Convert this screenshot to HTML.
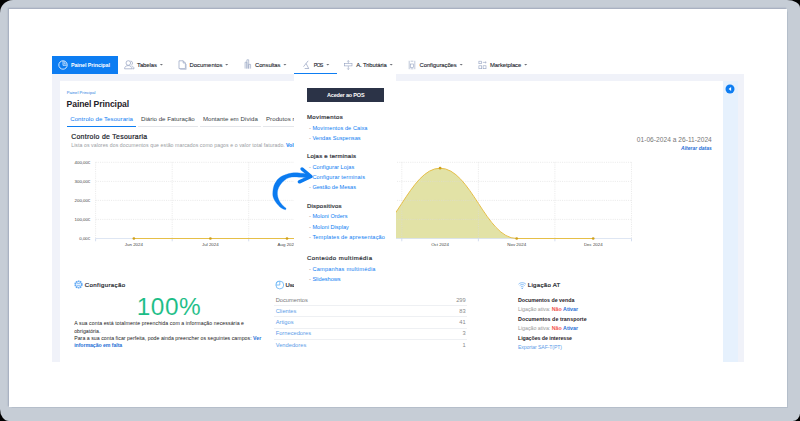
<!DOCTYPE html>
<html>
<head>
<meta charset="utf-8">
<style>
*{box-sizing:border-box;margin:0;padding:0}
html,body{width:800px;height:421px;overflow:hidden;background:#000;font-family:"Liberation Sans",sans-serif}
#frame{position:absolute;left:0;top:0;width:800px;height:421px;background:#c6cdd6;border-radius:13px 13px 7.5px 9px/13px 8px 7.5px 12px}
#card{position:absolute;left:9px;top:8.8px;width:777.8px;height:398.3px;background:#fff;box-shadow:-1px -1px 1px 0.2px rgba(110,125,155,.36),0.6px 0.6px 1px rgba(110,125,155,.18)}
.abs{position:absolute}
.t{position:absolute;white-space:nowrap;line-height:1;transform:translateY(-50%)}
</style>
</head>
<body>
<div id="frame"></div>
<div id="card"></div>

<!-- light band background of app -->
<div class="abs" style="left:52.3px;top:74.2px;width:691.3px;height:287.6px;background:#f0f2f9"></div>
<!-- white content panel -->
<div class="abs" style="left:59.6px;top:81.3px;width:663px;height:280.5px;background:#fff"></div>
<!-- light blue side bar -->
<div class="abs" style="left:722.6px;top:81.3px;width:15.2px;height:280.5px;background:#e6f1fd"></div>
<!-- collapse circle -->
<svg class="abs" style="left:725.2px;top:83.9px" width="10" height="10" viewBox="0 0 10 10"><circle cx="5" cy="5" r="4.5" fill="#0d7df2"/><path d="M6.1 3.1 L3.6 5 L6.1 6.9 Z" fill="#fff"/></svg>

<!-- NAV -->
<div class="abs" style="left:52.3px;top:56.2px;width:65.6px;height:18px;background:#0d7df2"></div>
<svg class="abs" style="left:58.3px;top:59.8px" width="10" height="10" viewBox="0 0 10 10" fill="none" stroke="#fff" stroke-width="0.8"><circle cx="5" cy="5" r="4.2"/><path d="M5 1.2 V5.3 H8.6" stroke-width="0.7"/><path d="M6.3 1.4 V3.9 H8.6" stroke-width="0.6"/></svg>


<svg class="abs" style="left:0;top:0" width="800" height="100" viewBox="0 0 800 100"><path d="M159.85 64.0 H162.95 L161.40 65.6 ZM225.15 64.0 H228.25 L226.70 65.6 ZM283.35 64.0 H286.45 L284.90 65.6 ZM326.25 64.0 H329.35 L327.80 65.6 ZM389.65 64.0 H392.75 L391.20 65.6 ZM459.65 64.0 H462.75 L461.20 65.6 ZM524.15 64.0 H527.25 L525.70 65.6 Z" fill="#6e7178"/></svg>
<!-- nav icons -->
<svg class="abs" style="left:124px;top:59.8px" width="11" height="10" viewBox="0 0 11 10" fill="none" stroke="#93a1c0" stroke-width="0.7"><circle cx="4.3" cy="3" r="2.3"/><path d="M0.6 8.8 C0.6 6.6 2.2 5.6 4.3 5.6 C6.4 5.6 8 6.6 8 8.8 Z"/><path d="M6.6 1 A2.2 2.2 0 0 1 7.2 5.2 M8.3 6.2 C9.4 6.6 10 7.4 10 8.8 H8.4"/></svg>
<svg class="abs" style="left:177.6px;top:59.6px" width="9" height="10" viewBox="0 0 9 10" fill="none" stroke="#93a1c0" stroke-width="0.7"><path d="M1 0.8 H5.2 L7.4 3 V8.6 H1 Z"/><path d="M5.2 0.8 V3 H7.4"/><path d="M2.2 9.4 H8.2 V4" stroke-width="0.5"/></svg>
<svg class="abs" style="left:243.6px;top:59.4px" width="8" height="10.4" viewBox="0 0 8 10.4" fill="none" stroke="#93a1c0" stroke-width="0.65"><path d="M1.1 9.6 V3.2 H2.9 V9.6 M2.9 9.6 V0.8 H4.7 V9.6 M4.7 9.6 V5.4 H6.6 V9.6"/></svg>
<svg class="abs" style="left:301.5px;top:59.6px" width="9" height="10" viewBox="0 0 9 10" fill="none" stroke="#93a1c0" stroke-width="0.7"><path d="M6.2 0.8 L1.5 6.7 M4.1 3.5 L6.6 8.3 M2.7 8.5 H7"/></svg>
<svg class="abs" style="left:344.4px;top:59.6px" width="9" height="10" viewBox="0 0 9 10" fill="none" stroke="#93a1c0" stroke-width="0.6"><path d="M4.3 0.6 V3.4 M4.3 6 V9.5 M3.3 1.6 L4.3 0.6 L5.3 1.6 M3.3 8.5 L4.3 9.5 L5.3 8.5"/><rect x="0.6" y="3.5" width="7.4" height="2.4"/></svg>
<svg class="abs" style="left:408px;top:59.6px" width="8" height="10" viewBox="0 0 8 10" fill="none" stroke="#93a1c0" stroke-width="0.6"><path d="M1.2 0.8 V9.2 M6.8 0.8 V9.2"/><path d="M2.6 1.2 H5.4 M2.6 8.8 H5.4"/><rect x="2.6" y="4" width="2.8" height="3.4"/></svg>
<svg class="abs" style="left:477.8px;top:59.8px" width="9" height="10" viewBox="0 0 9 10" fill="none" stroke="#93a1c0" stroke-width="0.6"><rect x="0.9" y="1.2" width="2.7" height="2.5"/><rect x="0.9" y="5.8" width="2.8" height="2.9"/><rect x="5.1" y="5.8" width="2.9" height="2.9"/><path d="M4.8 2.4 H8.2 M7.2 1.6 L8.2 2.4 L7.2 3.2"/></svg>

<!-- PANEL HEADER -->

<!-- tabs -->
<div class="abs" style="left:66.8px;top:125.9px;width:69.4px;height:1px;background:#0d7df2"></div>
<div class="abs" style="left:137.5px;top:126px;width:60px;height:0.7px;background:#e4e6ea"></div>
<div class="abs" style="left:199.8px;top:126px;width:61px;height:0.7px;background:#e4e6ea"></div>
<div class="abs" style="left:262.5px;top:126px;width:40px;height:0.7px;background:#e4e6ea"></div>



<!-- CHART -->
<svg class="abs" style="left:0;top:0" width="800" height="421" viewBox="0 0 800 421">
<path d="M133.9 238.5 H363.5 C394.2 238.5 409.5 168.2 440.1 168.2 C470.7 168.2 486.0 238.5 516.7 238.5 H593.2 Z" fill="#e2e2a6"/>
<g stroke="#dadada" stroke-width="0.55" stroke-dasharray="1.1 1.1" fill="none">
<path d="M95.6 162.3H631.5M95.6 181.4H631.5M95.6 200.4H631.5M95.6 219.4H631.5"/>
<path d="M95.6 162.3V238.5M172.2 162.3V238.5M248.7 162.3V238.5M325.3 162.3V238.5M401.8 162.3V238.5M478.4 162.3V238.5M554.9 162.3V238.5M631.5 162.3V238.5"/>
</g>
<path d="M95.6 238.5H631.5" stroke="#d5dff0" stroke-width="0.8"/>
<path d="M95.6 238.5V241.3M172.2 238.5V241.3M248.7 238.5V241.3M325.3 238.5V241.3M401.8 238.5V241.3M478.4 238.5V241.3M554.9 238.5V241.3M631.5 238.5V241.3" stroke="#c3d0ea" stroke-width="0.7"/>
<path d="M133.9 238.5 H363.5 C394.2 238.5 409.5 168.2 440.1 168.2 C470.7 168.2 486.0 238.5 516.7 238.5 H593.2" fill="none" stroke="#e6bf48" stroke-width="1"/>
<g fill="#cfa01c"><circle cx="133.9" cy="238.5" r="1.35"/><circle cx="210.4" cy="238.5" r="1.35"/><circle cx="287.0" cy="238.5" r="1.35"/><circle cx="363.5" cy="238.5" r="1.35"/><circle cx="440.1" cy="168.2" r="1.35"/><circle cx="516.7" cy="238.5" r="1.35"/><circle cx="593.2" cy="238.5" r="1.35"/></g>
</svg>

<!-- CONFIGURAÇÃO -->
<svg class="abs" style="left:73.8px;top:280px" width="9" height="9" viewBox="0 0 10 10" fill="none" stroke="#5aa5f3" stroke-width="0.8"><circle cx="5" cy="5" r="3.8" stroke-dasharray="1.7 0.7" stroke-width="1.5"/><circle cx="5" cy="5" r="3.1"/><path d="M3.4 4 H6.6 M3.4 6 H6.6"/></svg>

<!-- USO -->
<svg class="abs" style="left:275.3px;top:279.6px" width="10" height="10" viewBox="0 0 10 10" fill="none" stroke="#5aaef6" stroke-width="0.75"><circle cx="4.8" cy="5" r="3.9"/><path d="M4.8 5 V1.1 M4.8 5 H0.9"/><path d="M0.9 3.4 A4.6 4.6 0 0 1 3.4 0.9" stroke-width="0.6"/></svg>

<div class="abs" style="left:274px;top:305.2px;width:193px;height:0.7px;background:#eef0f3"></div>
<div class="abs" style="left:274px;top:316.3px;width:193px;height:0.7px;background:#eef0f3"></div>
<div class="abs" style="left:274px;top:327.5px;width:193px;height:0.7px;background:#eef0f3"></div>
<div class="abs" style="left:274px;top:338.6px;width:193px;height:0.7px;background:#eef0f3"></div>
<!-- LIGAÇÃO AT -->
<svg class="abs" style="left:518px;top:281.6px" width="8.4" height="7.6" viewBox="0 0 10 9" fill="none" stroke="#5aa5f3" stroke-width="0.8"><path d="M0.6 2.6 C3 0.2 7 0.2 9.4 2.6 M2 4.2 C3.8 2.6 6.2 2.6 8 4.2 M3.4 5.8 C4.4 5 5.6 5 6.6 5.8"/><path d="M4.2 7 L5 8.2 L5.8 7 Z" fill="#5aa5f3" stroke-width="0.4"/></svg>

<div class="t" style="left:70.9px;top:66.05px;font-size:5.4px;letter-spacing:-0.070px;color:#fff;font-weight:bold">Painel Principal</div>
<div class="t" style="left:137px;top:65.71px;font-size:5.9px;letter-spacing:-0.052px;color:#23262e;-webkit-text-stroke:0.1px #23262e;">Tabelas</div>
<div class="t" style="left:189.5px;top:65.71px;font-size:5.9px;letter-spacing:-0.009px;color:#23262e;-webkit-text-stroke:0.1px #23262e;">Documentos</div>
<div class="t" style="left:255px;top:65.71px;font-size:5.9px;letter-spacing:-0.088px;color:#23262e;-webkit-text-stroke:0.1px #23262e;">Consultas</div>
<div class="t" style="left:356.2px;top:65.71px;font-size:5.9px;letter-spacing:-0.101px;color:#23262e;-webkit-text-stroke:0.1px #23262e;">A. Tributária</div>
<div class="t" style="left:419.5px;top:65.71px;font-size:5.9px;letter-spacing:-0.061px;color:#23262e;-webkit-text-stroke:0.1px #23262e;">Configurações</div>
<div class="t" style="left:490px;top:65.71px;font-size:5.9px;letter-spacing:-0.084px;color:#23262e;-webkit-text-stroke:0.1px #23262e;">Marketplace</div>
<div class="t" style="left:66.8px;top:92.77px;font-size:4.1px;letter-spacing:0.032px;color:#2a7de0">Painel Principal</div>
<div class="t" style="left:66.6px;top:104.08px;font-size:8.6px;letter-spacing:-0.100px;font-weight:bold;color:#1f2229">Painel Principal</div>
<div class="t" style="left:70.2px;top:118.89px;font-size:6.1px;letter-spacing:0.060px;color:#0d7df2">Controlo de Tesouraria</div>
<div class="t" style="left:141px;top:118.89px;font-size:6.1px;letter-spacing:0.009px;color:#3b3f48">Diário de Faturação</div>
<div class="t" style="left:202.9px;top:118.89px;font-size:6.1px;letter-spacing:0.021px;color:#3b3f48">Montante em Dívida</div>
<div class="t" style="left:266px;top:118.89px;font-size:6.1px;letter-spacing:0.050px;color:#3b3f48">Produtos mais vendidos</div>
<div class="t" style="left:71.2px;top:136.90px;font-size:6.9px;letter-spacing:0.305px;color:#23262d;-webkit-text-stroke:0.22px #23262d">Controlo de Tesouraria</div>
<div class="t" style="left:71.2px;top:146.23px;font-size:5.2px;letter-spacing:0.063px;color:#9a9da3">Lista os valores dos documentos que estão marcados como pagos e o valor total faturado.</div>
<div class="t" style="left:286px;top:146.23px;font-size:5.2px;color:#0d7df2"><b>Voltar</b></div>
<div class="t" style="left:636.8px;top:139.50px;font-size:6.6px;letter-spacing:0.031px;color:#777">01-06-2024 a 26-11-2024</div>
<div class="t" style="left:681px;top:148.00px;font-size:5px;letter-spacing:0.018px;color:#1f6fd6;font-weight:bold;font-style:italic">Alterar datas</div>
<div class="t" style="left:74.6px;top:163.07px;font-size:4.4px;letter-spacing:-0.029px;color:#444;">400,00€</div>
<div class="t" style="left:74.6px;top:181.50px;font-size:4.4px;letter-spacing:-0.029px;color:#444;">300,00€</div>
<div class="t" style="left:74.6px;top:201.09px;font-size:4.4px;letter-spacing:-0.029px;color:#444;">200,00€</div>
<div class="t" style="left:74.6px;top:220.08px;font-size:4.4px;letter-spacing:-0.029px;color:#444;">100,00€</div>
<div class="t" style="left:79.2px;top:238.70px;font-size:4.4px;letter-spacing:0.025px;color:#444;">0,00€</div>
<div class="t" style="left:133.9px;top:244.60px;font-size:4.4px;color:#444;transform:translate(-50%,-50%)">Jun 2024</div>
<div class="t" style="left:210.4px;top:244.60px;font-size:4.4px;color:#444;transform:translate(-50%,-50%)">Jul 2024</div>
<div class="t" style="left:287px;top:244.60px;font-size:4.4px;color:#444;transform:translate(-50%,-50%)">Aug 2024</div>
<div class="t" style="left:363.6px;top:244.60px;font-size:4.4px;color:#444;transform:translate(-50%,-50%)">Sep 2024</div>
<div class="t" style="left:440.1px;top:244.60px;font-size:4.4px;color:#444;transform:translate(-50%,-50%)">Oct 2024</div>
<div class="t" style="left:516.7px;top:244.60px;font-size:4.4px;color:#444;transform:translate(-50%,-50%)">Nov 2024</div>
<div class="t" style="left:593.3px;top:244.60px;font-size:4.4px;color:#444;transform:translate(-50%,-50%)">Dec 2024</div>
<div class="t" style="left:84.75px;top:284.63px;font-size:6.1px;letter-spacing:0.382px;color:#23262d;-webkit-text-stroke:0.2px #23262d">Configuração</div>
<div class="t" style="left:136.70000000000002px;top:307.15px;font-size:24.4px;letter-spacing:0.570px;color:#1bbd86;-webkit-text-stroke:0.08px #fff">100%</div>
<div class="t" style="left:74.2px;top:323.90px;font-size:5.2px;letter-spacing:0.077px;color:#222">A sua conta está totalmente preenchida com a informação necessária e</div>
<div class="t" style="left:74.2px;top:331.91px;font-size:5.2px;letter-spacing:0.022px;color:#222">obrigatória.</div>
<div class="t" style="left:74.2px;top:339.06px;font-size:5.2px;letter-spacing:0.044px;color:#222">Para a sua conta ficar perfeita, pode ainda preencher os seguintes campos: <b style="color:#1f6fd6">Ver</b></div>
<div class="t" style="left:74.2px;top:346.30px;font-size:5.2px;letter-spacing:-0.056px;color:#1f6fd6"><b>informação em falta</b></div>
<div class="t" style="left:285.5px;top:285.75px;font-size:5.9px;letter-spacing:-0.100px;color:#23262d;-webkit-text-stroke:0.2px #23262d">Uso</div>
<div class="t" style="left:527.8px;top:285.05px;font-size:6.1px;letter-spacing:0.273px;color:#23262d;-webkit-text-stroke:0.2px #23262d">Ligação AT</div>
<div class="t" style="left:518px;top:301.10px;font-size:5.3px;letter-spacing:-0.006px;font-weight:bold;color:#1f2229">Documentos de venda</div>
<div class="t" style="left:518px;top:309.91px;font-size:5.3px;letter-spacing:-0.029px;color:#999">Ligação ativa: <b style="color:#f2554f">Não</b> <b style="color:#1f6fd6">Ativar</b></div>
<div class="t" style="left:518px;top:320.08px;font-size:5.3px;letter-spacing:0.052px;font-weight:bold;color:#1f2229">Documentos de transporte</div>
<div class="t" style="left:518px;top:328.50px;font-size:5.3px;letter-spacing:-0.029px;color:#999">Ligação ativa: <b style="color:#f2554f">Não</b> <b style="color:#1f6fd6">Ativar</b></div>
<div class="t" style="left:518px;top:338.80px;font-size:5.3px;letter-spacing:-0.068px;font-weight:bold;color:#1f2229">Ligações de interesse</div>
<div class="t" style="left:518px;top:347.50px;font-size:5.1px;letter-spacing:-0.076px;color:#5a9be8">Exportar SAF-T(PT)</div>
<div class="t" style="left:275.7px;top:300.89px;font-size:5.7px;letter-spacing:0.020px;color:#777">Documentos</div>
<div class="t" style="left:465.7px;top:300.89px;font-size:5.7px;color:#8a8a8a;transform:translate(-100%,-50%)">299</div>
<div class="t" style="left:275.7px;top:311.97px;font-size:5.7px;letter-spacing:0.020px;color:#5a9be8">Clientes</div>
<div class="t" style="left:465.7px;top:311.97px;font-size:5.7px;color:#8a8a8a;transform:translate(-100%,-50%)">83</div>
<div class="t" style="left:275.7px;top:322.80px;font-size:5.7px;letter-spacing:0.020px;color:#5a9be8">Artigos</div>
<div class="t" style="left:465.7px;top:322.80px;font-size:5.7px;color:#8a8a8a;transform:translate(-100%,-50%)">41</div>
<div class="t" style="left:275.7px;top:333.80px;font-size:5.7px;letter-spacing:0.020px;color:#5a9be8">Fornecedores</div>
<div class="t" style="left:465.7px;top:333.80px;font-size:5.7px;color:#8a8a8a;transform:translate(-100%,-50%)">3</div>
<div class="t" style="left:275.7px;top:346.12px;font-size:5.7px;letter-spacing:0.020px;color:#5a9be8">Vendedores</div>
<div class="t" style="left:465.7px;top:346.12px;font-size:5.7px;color:#8a8a8a;transform:translate(-100%,-50%)">1</div>
<!-- POS DROPDOWN -->
<div class="abs" style="left:294.2px;top:73.6px;width:102px;height:218.4px;background:#fff"></div>
<div class="abs" style="left:294.2px;top:72.9px;width:43.3px;height:1.5px;background:#0d7df2"></div>
<div class="abs" style="left:306.7px;top:87.9px;width:77.7px;height:14.6px;background:#2b3347"></div>


<div class="t" style="left:313.7px;top:65.61px;font-size:5.3px;letter-spacing:-0.744px;color:#23262e;-webkit-text-stroke:0.1px #23262e;">POS</div>
<div class="t" style="left:327px;top:96.08px;font-size:5.5px;letter-spacing:-0.179px;font-weight:bold;color:#fff">Aceder ao POS</div>
<div class="t" style="left:306.9px;top:116.90px;font-size:6.0px;letter-spacing:0.395px;color:#2a2d34;-webkit-text-stroke:0.2px #2a2d34">Movimentos</div>
<div class="t" style="left:306.9px;top:156.18px;font-size:6.0px;letter-spacing:0.234px;color:#2a2d34;-webkit-text-stroke:0.2px #2a2d34">Lojas e terminais</div>
<div class="t" style="left:306.9px;top:206.30px;font-size:6.0px;letter-spacing:0.244px;color:#2a2d34;-webkit-text-stroke:0.2px #2a2d34">Dispositivos</div>
<div class="t" style="left:306.9px;top:257.90px;font-size:6.0px;letter-spacing:0.466px;color:#2a2d34;-webkit-text-stroke:0.2px #2a2d34">Conteúdo multimédia</div>
<div class="t" style="left:312.4px;top:128.74px;font-size:5.6px;letter-spacing:0.072px;color:#0d7df2">Movimentos de Caixa</div>
<div class="t" style="left:309px;top:128.74px;font-size:5.6px;color:#888">-</div>
<div class="t" style="left:312.4px;top:138.70px;font-size:5.6px;letter-spacing:0.020px;color:#0d7df2">Vendas Suspensas</div>
<div class="t" style="left:309px;top:138.70px;font-size:5.6px;color:#888">-</div>
<div class="t" style="left:312.4px;top:167.50px;font-size:5.6px;letter-spacing:0.050px;color:#0d7df2">Configurar Lojas</div>
<div class="t" style="left:309px;top:167.50px;font-size:5.6px;color:#888">-</div>
<div class="t" style="left:312.4px;top:177.50px;font-size:5.6px;letter-spacing:0.117px;color:#0d7df2">Configurar terminais</div>
<div class="t" style="left:309px;top:177.50px;font-size:5.6px;color:#888">-</div>
<div class="t" style="left:312.4px;top:187.50px;font-size:5.6px;letter-spacing:-0.017px;color:#0d7df2">Gestão de Mesas</div>
<div class="t" style="left:309px;top:187.50px;font-size:5.6px;color:#888">-</div>
<div class="t" style="left:312.4px;top:216.70px;font-size:5.6px;letter-spacing:-0.003px;color:#0d7df2">Moloni Orders</div>
<div class="t" style="left:309px;top:216.70px;font-size:5.6px;color:#888">-</div>
<div class="t" style="left:312.4px;top:227.87px;font-size:5.6px;letter-spacing:0.010px;color:#0d7df2">Moloni Display</div>
<div class="t" style="left:309px;top:227.87px;font-size:5.6px;color:#888">-</div>
<div class="t" style="left:312.4px;top:238.06px;font-size:5.6px;letter-spacing:0.161px;color:#0d7df2">Templates de apresentação</div>
<div class="t" style="left:309px;top:238.06px;font-size:5.6px;color:#888">-</div>
<div class="t" style="left:312.4px;top:269.89px;font-size:5.6px;letter-spacing:0.228px;color:#0d7df2">Campanhas multimédia</div>
<div class="t" style="left:309px;top:269.89px;font-size:5.6px;color:#888">-</div>
<div class="t" style="left:312.4px;top:279.97px;font-size:5.6px;letter-spacing:-0.011px;color:#0d7df2">Slideshows</div>
<div class="t" style="left:309px;top:279.97px;font-size:5.6px;color:#888">-</div>
<!-- ARROW -->
<svg class="abs" style="left:0;top:0" width="800" height="421" viewBox="0 0 800 421">
<path d="M285.6 209.8 C284.6 209.4 281.8 208.7 279.9 207.0 C278.0 205.3 275.4 202.0 274.2 199.6 C273.0 197.2 272.6 195.2 272.8 192.5 C272.9 189.8 273.5 186.2 274.9 183.6 C276.2 181.0 278.0 178.6 280.8 176.8 C283.6 175.1 288.2 173.6 291.8 173.0 C295.4 172.4 299.6 172.9 302.4 173.3 C305.3 173.6 307.9 174.6 309.0 174.9 L309.0 178.0 C307.9 177.9 305.3 177.5 302.4 177.3 C299.6 177.1 294.7 176.6 291.8 177.1 C288.8 177.5 286.9 178.5 284.9 180.0 C282.8 181.5 280.8 183.9 279.5 186.0 C278.3 188.0 277.5 190.2 277.4 192.5 C277.2 194.8 277.9 197.6 278.7 199.6 C279.5 201.7 281.0 203.5 282.3 205.0 C283.5 206.4 285.4 207.6 286.1 208.2 Z" fill="#0b7bf0" stroke="#0b7bf0" stroke-width="0.3" stroke-linejoin="round"/>
<path d="M302.1 169.0 L311.0 176.5 L299.4 181.8" fill="none" stroke="#0b7bf0" stroke-width="3.5" stroke-linecap="round" stroke-linejoin="round"/>
</svg>
</body>
</html>
